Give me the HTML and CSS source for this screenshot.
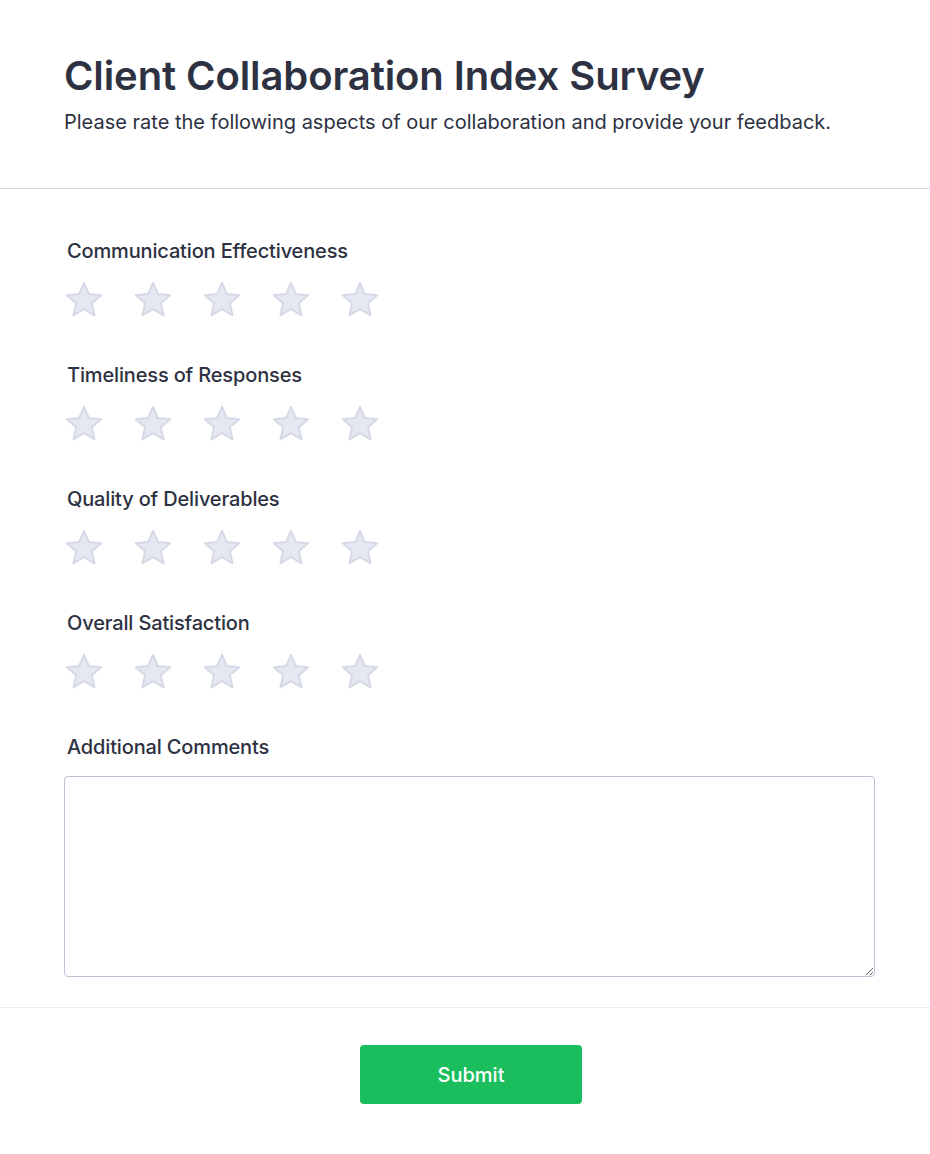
FILE: index.html
```html
<!DOCTYPE html>
<html lang="en">
<head>
<meta charset="utf-8">
<title>Client Collaboration Index Survey</title>
<link rel="stylesheet" href="styles.css">
</head>
<body>
<div class="survey">
  <header class="survey-header">
    <h1 class="title">Client Collaboration Index Survey</h1>
    <p class="subtitle">Please rate the following aspects of our collaboration and provide your feedback.</p>
  </header>
  <form class="survey-body">
    <div class="question">
      <label class="label">Communication Effectiveness</label>
      <div class="stars">
        <svg class="star" viewBox="0 0 40 40"><path d="M20 2.8 L24.88 14.09 L37.12 15.24 L27.89 23.36 L30.58 35.36 L20 29.1 L9.42 35.36 L12.11 23.36 L2.88 15.24 L15.12 14.09 Z"/></svg>
        <svg class="star" viewBox="0 0 40 40"><path d="M20 2.8 L24.88 14.09 L37.12 15.24 L27.89 23.36 L30.58 35.36 L20 29.1 L9.42 35.36 L12.11 23.36 L2.88 15.24 L15.12 14.09 Z"/></svg>
        <svg class="star" viewBox="0 0 40 40"><path d="M20 2.8 L24.88 14.09 L37.12 15.24 L27.89 23.36 L30.58 35.36 L20 29.1 L9.42 35.36 L12.11 23.36 L2.88 15.24 L15.12 14.09 Z"/></svg>
        <svg class="star" viewBox="0 0 40 40"><path d="M20 2.8 L24.88 14.09 L37.12 15.24 L27.89 23.36 L30.58 35.36 L20 29.1 L9.42 35.36 L12.11 23.36 L2.88 15.24 L15.12 14.09 Z"/></svg>
        <svg class="star" viewBox="0 0 40 40"><path d="M20 2.8 L24.88 14.09 L37.12 15.24 L27.89 23.36 L30.58 35.36 L20 29.1 L9.42 35.36 L12.11 23.36 L2.88 15.24 L15.12 14.09 Z"/></svg>
      </div>
    </div>
    <div class="question">
      <label class="label">Timeliness of Responses</label>
      <div class="stars">
        <svg class="star" viewBox="0 0 40 40"><path d="M20 2.8 L24.88 14.09 L37.12 15.24 L27.89 23.36 L30.58 35.36 L20 29.1 L9.42 35.36 L12.11 23.36 L2.88 15.24 L15.12 14.09 Z"/></svg>
        <svg class="star" viewBox="0 0 40 40"><path d="M20 2.8 L24.88 14.09 L37.12 15.24 L27.89 23.36 L30.58 35.36 L20 29.1 L9.42 35.36 L12.11 23.36 L2.88 15.24 L15.12 14.09 Z"/></svg>
        <svg class="star" viewBox="0 0 40 40"><path d="M20 2.8 L24.88 14.09 L37.12 15.24 L27.89 23.36 L30.58 35.36 L20 29.1 L9.42 35.36 L12.11 23.36 L2.88 15.24 L15.12 14.09 Z"/></svg>
        <svg class="star" viewBox="0 0 40 40"><path d="M20 2.8 L24.88 14.09 L37.12 15.24 L27.89 23.36 L30.58 35.36 L20 29.1 L9.42 35.36 L12.11 23.36 L2.88 15.24 L15.12 14.09 Z"/></svg>
        <svg class="star" viewBox="0 0 40 40"><path d="M20 2.8 L24.88 14.09 L37.12 15.24 L27.89 23.36 L30.58 35.36 L20 29.1 L9.42 35.36 L12.11 23.36 L2.88 15.24 L15.12 14.09 Z"/></svg>
      </div>
    </div>
    <div class="question">
      <label class="label">Quality of Deliverables</label>
      <div class="stars">
        <svg class="star" viewBox="0 0 40 40"><path d="M20 2.8 L24.88 14.09 L37.12 15.24 L27.89 23.36 L30.58 35.36 L20 29.1 L9.42 35.36 L12.11 23.36 L2.88 15.24 L15.12 14.09 Z"/></svg>
        <svg class="star" viewBox="0 0 40 40"><path d="M20 2.8 L24.88 14.09 L37.12 15.24 L27.89 23.36 L30.58 35.36 L20 29.1 L9.42 35.36 L12.11 23.36 L2.88 15.24 L15.12 14.09 Z"/></svg>
        <svg class="star" viewBox="0 0 40 40"><path d="M20 2.8 L24.88 14.09 L37.12 15.24 L27.89 23.36 L30.58 35.36 L20 29.1 L9.42 35.36 L12.11 23.36 L2.88 15.24 L15.12 14.09 Z"/></svg>
        <svg class="star" viewBox="0 0 40 40"><path d="M20 2.8 L24.88 14.09 L37.12 15.24 L27.89 23.36 L30.58 35.36 L20 29.1 L9.42 35.36 L12.11 23.36 L2.88 15.24 L15.12 14.09 Z"/></svg>
        <svg class="star" viewBox="0 0 40 40"><path d="M20 2.8 L24.88 14.09 L37.12 15.24 L27.89 23.36 L30.58 35.36 L20 29.1 L9.42 35.36 L12.11 23.36 L2.88 15.24 L15.12 14.09 Z"/></svg>
      </div>
    </div>
    <div class="question">
      <label class="label">Overall Satisfaction</label>
      <div class="stars">
        <svg class="star" viewBox="0 0 40 40"><path d="M20 2.8 L24.88 14.09 L37.12 15.24 L27.89 23.36 L30.58 35.36 L20 29.1 L9.42 35.36 L12.11 23.36 L2.88 15.24 L15.12 14.09 Z"/></svg>
        <svg class="star" viewBox="0 0 40 40"><path d="M20 2.8 L24.88 14.09 L37.12 15.24 L27.89 23.36 L30.58 35.36 L20 29.1 L9.42 35.36 L12.11 23.36 L2.88 15.24 L15.12 14.09 Z"/></svg>
        <svg class="star" viewBox="0 0 40 40"><path d="M20 2.8 L24.88 14.09 L37.12 15.24 L27.89 23.36 L30.58 35.36 L20 29.1 L9.42 35.36 L12.11 23.36 L2.88 15.24 L15.12 14.09 Z"/></svg>
        <svg class="star" viewBox="0 0 40 40"><path d="M20 2.8 L24.88 14.09 L37.12 15.24 L27.89 23.36 L30.58 35.36 L20 29.1 L9.42 35.36 L12.11 23.36 L2.88 15.24 L15.12 14.09 Z"/></svg>
        <svg class="star" viewBox="0 0 40 40"><path d="M20 2.8 L24.88 14.09 L37.12 15.24 L27.89 23.36 L30.58 35.36 L20 29.1 L9.42 35.36 L12.11 23.36 L2.88 15.24 L15.12 14.09 Z"/></svg>
      </div>
    </div>
    <div class="question comments">
      <label class="label">Additional Comments</label>
      <textarea class="textarea"></textarea>
    </div>
  </form>
  <footer class="survey-footer">
    <button type="button" class="submit">Submit</button>
  </footer>
</div>
</body>
</html>
```

FILE: styles.css
```css
* { box-sizing: border-box; }
html, body {
  margin: 0;
  padding: 0;
  background: #ffffff;
}
body {
  font-family: Inter, "Noto Sans", sans-serif;
  color: #2d3142;
}
.survey {
  width: 930px;
  min-height: 1154px;
}
.survey-header {
  padding: 52px 55px 52px 64px;
  border-bottom: 1px solid #d9d9e6;
}
.title {
  margin: 0;
  font-size: 40px;
  line-height: 48px;
  font-weight: 600;
  color: #2d3142;
  letter-spacing: -0.1px;
}
.subtitle {
  margin: 8px 0 0 0;
  font-size: 20px;
  line-height: 28px;
  font-weight: 400;
  color: #2d3142;
}
.survey-body {
  padding: 48px 55px 30px 64px;
  border-bottom: 1px solid #ebebf2;
}
.question {
  display: flex;
  flex-direction: column;
  margin-bottom: 41px;
}
.question.comments {
  margin-bottom: 0;
}
.label {
  display: block;
  margin-left: 3px;
  font-size: 20px;
  line-height: 28px;
  font-weight: 500;
  letter-spacing: -0.15px;
  color: #2d3142;
}
.stars {
  display: flex;
  gap: 29px;
  margin-top: 15px;
}
.star {
  width: 40px;
  height: 40px;
  display: block;
}
.star path {
  fill: #e5e7f1;
  stroke: #d6d9e6;
  stroke-width: 2;
  stroke-linejoin: round;
}
.textarea {
  display: block;
  margin-top: 15px;
  width: 811px;
  height: 201px;
  border: 1px solid #c2c2d6;
  border-radius: 4px;
  font-family: inherit;
  font-size: 16px;
  resize: vertical;
  background: #fff;
}
.survey-footer {
  display: flex;
  justify-content: center;
  padding: 37px 55px 40px 67px;
}
.submit {
  width: 222px;
  height: 59px;
  border: none;
  border-radius: 4px;
  background: #1abe5d;
  color: #ffffff;
  font-family: inherit;
  font-size: 20px;
  font-weight: 500;
  cursor: pointer;
}
```
